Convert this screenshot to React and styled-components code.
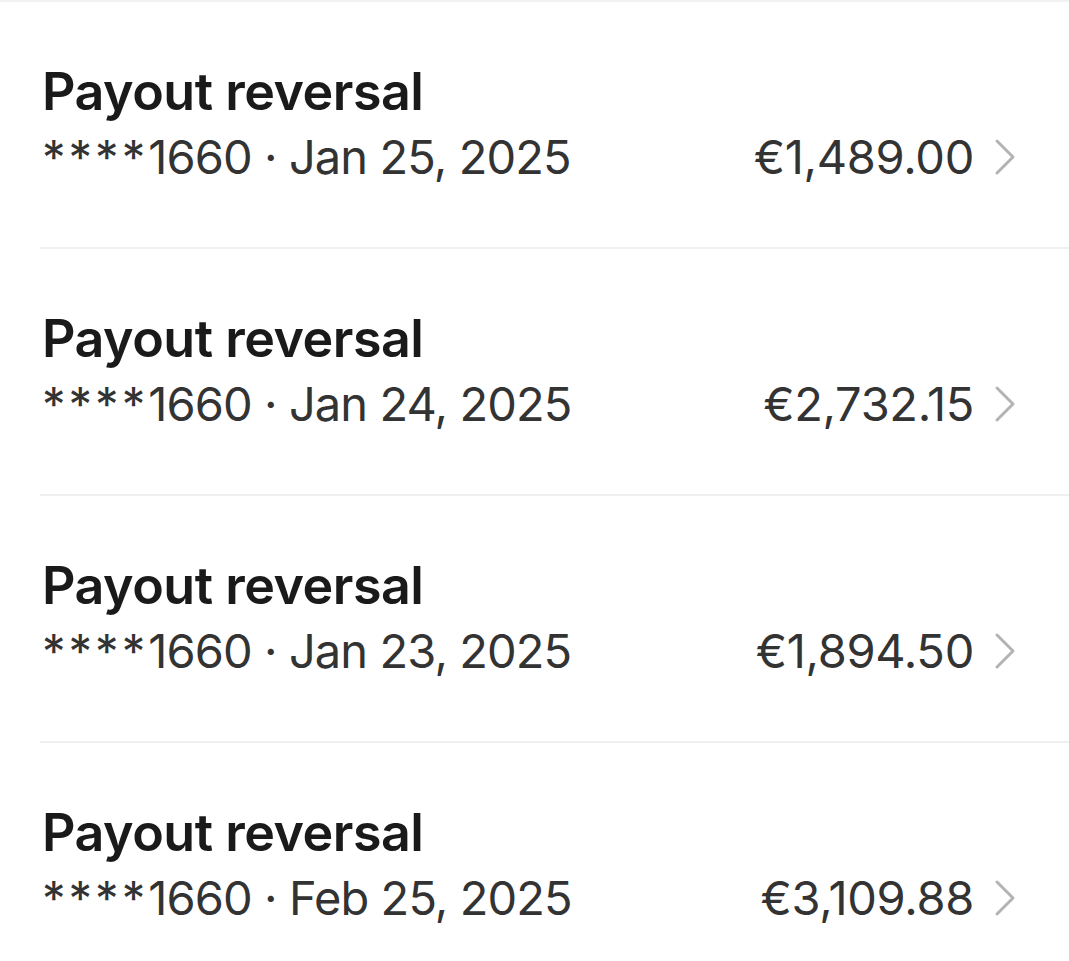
import React from "react";
import styled, { createGlobalStyle } from "styled-components";

const Global = createGlobalStyle`
  html, body { margin: 0; padding: 0; background: #fff; }
  body { font-family: "Inter", "Liberation Sans", sans-serif; -webkit-font-smoothing: antialiased; }
`;

const Page = styled.div`
  width: 1069px;
  min-height: 961px;
  background: #fff;
  border-top: 2px solid #f1f1f1;
  box-sizing: border-box;
`;

const List = styled.ul`
  list-style: none;
  margin: 0;
  padding: 0 0 0 40px;
`;

const Row = styled.li`
  display: flex;
  flex-direction: column;
  box-sizing: border-box;
  height: 247px;
  padding: 59px 52px 0 2px;
  border-bottom: 2px solid #efefef;
`;

const Title = styled.div`
  font-size: 52px;
  font-weight: 600;
  color: #1a1a1a;
  line-height: 62px;
  letter-spacing: -0.5px;
`;

const Meta = styled.div`
  display: flex;
  align-items: center;
  justify-content: space-between;
  margin-top: 4px;
  font-size: 47px;
  line-height: 60px;
  color: #333;
  font-weight: 400;
  letter-spacing: -0.9px;
`;

const Mask = styled.span`
  letter-spacing: 3px;
`;

const Amount = styled.div`
  display: flex;
  align-items: center;
  gap: 20px;
  letter-spacing: -0.3px;
`;

const Chevron = () => (
  <svg width="23" height="38" viewBox="0 0 23 38" fill="none">
    <path d="M3 3 L19 19 L3 35" stroke="#b3b3b3" strokeWidth="3" strokeLinecap="round" strokeLinejoin="round" />
  </svg>
);

const items = [
  { date: "Jan 25, 2025", amount: "€1,489.00" },
  { date: "Jan 24, 2025", amount: "€2,732.15" },
  { date: "Jan 23, 2025", amount: "€1,894.50" },
  { date: "Feb 25, 2025", amount: "€3,109.88" },
];

export default function App() {
  return (
    <Page>
      <Global />
      <List>
        {items.map((it) => (
          <Row key={it.date}>
            <Title>Payout reversal</Title>
            <Meta>
              <span>
                <Mask>****</Mask>1660 · {it.date}
              </span>
              <Amount>
                <span>{it.amount}</span>
                <Chevron />
              </Amount>
            </Meta>
          </Row>
        ))}
      </List>
    </Page>
  );
}
